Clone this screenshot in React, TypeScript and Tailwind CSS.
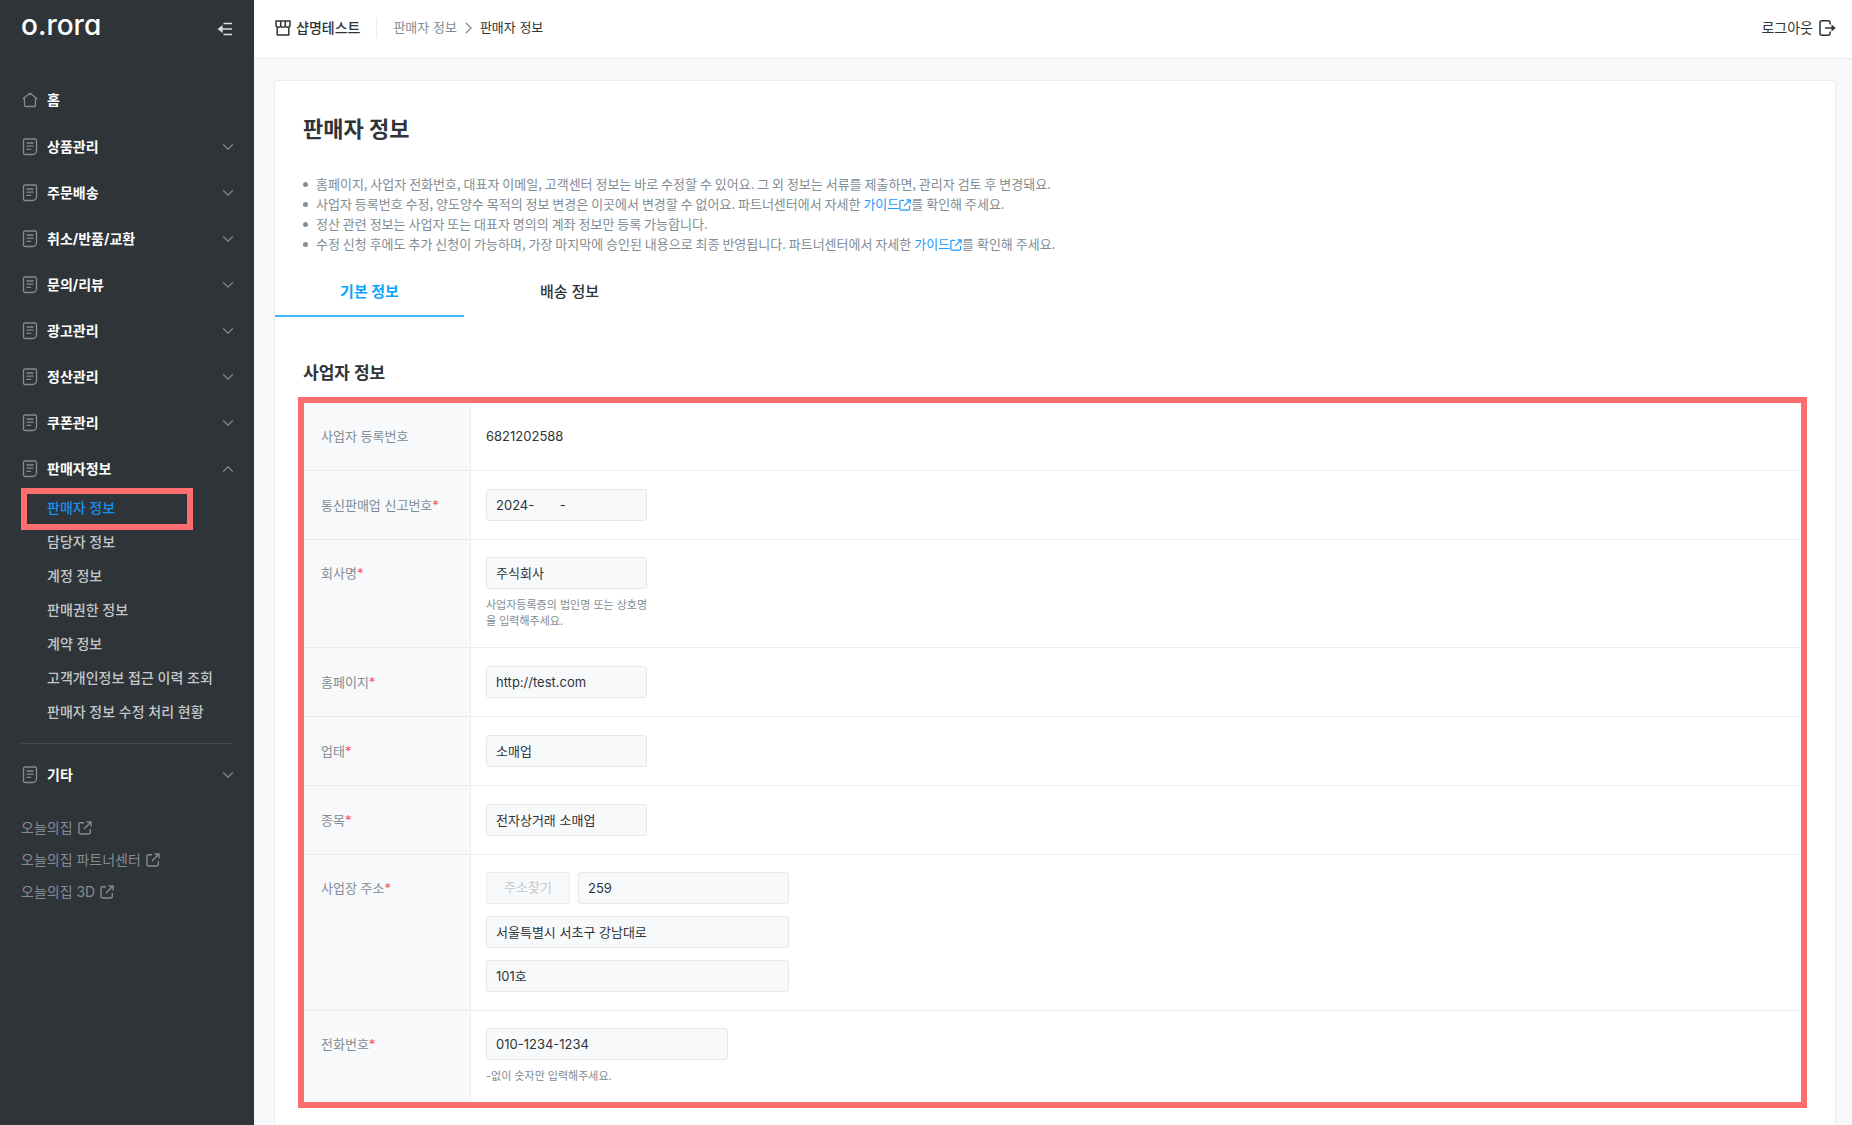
import { useState } from "react";
import type { ReactNode } from "react";

const menus = ["상품관리", "주문배송", "취소/반품/교환", "문의/리뷰", "광고관리", "정산관리", "쿠폰관리"];

const sellerMenus = [
    "판매자 정보",
    "담당자 정보",
    "계정 정보",
    "판매권한 정보",
    "계약 정보",
    "고객개인정보 접근 이력 조회",
    "판매자 정보 수정 처리 현황",
];

const outLinks = ["오늘의집", "오늘의집 파트너센터", "오늘의집 3D"];

function HomeIcon() {
    return (
        <svg width="16" height="16" viewBox="0 0 16 16" fill="none" stroke="currentColor" strokeWidth="1.3" strokeLinejoin="round">
            <path d="M8 1.2 1.2 6.6h1.3v6.6c0 .8.5 1.3 1.3 1.3h8.4c.8 0 1.3-.5 1.3-1.3V6.6h1.3z" />
        </svg>
    );
}

function DocIcon() {
    return (
        <svg width="16" height="18" viewBox="0 0 16 18" fill="none" stroke="currentColor" strokeWidth="1.3" strokeLinecap="round" strokeLinejoin="round">
            <path d="M2.9 1h10.200c.8 0 1.400.6 1.400 1.400v10.400c0 2-1.700 3.700-3.700 3.700H2.900c-.8 0-1.400-.6-1.400-1.400V2.400C1.500 1.600 2.100 1 2.900 1z" />
            <path d="M5 5h6M5 8.200h6M5 11.400h3.600" />
        </svg>
    );
}

function Chevron({ up }: { up?: boolean }) {
    return (
        <svg width="12" height="8" viewBox="0 0 12 8" fill="none" stroke="currentColor" strokeWidth="1.3">
            <path d={up ? "M1.2 6.6 6 1.8l4.8 4.8" : "M1.2 1.4 6 6.2l4.8-4.8"} />
        </svg>
    );
}

function OutIcon({ size }: { size: number }) {
    return (
        <svg className="inline-block shrink-0" width={size} height={size} viewBox="0 0 14 14" fill="none" stroke="currentColor" strokeWidth="1.4" strokeLinejoin="round">
            <path d="M6 1.7H2.4c-.8 0-1.4.6-1.4 1.4v8.5c0 .8.6 1.4 1.4 1.4h8.5c.8 0 1.4-.6 1.4-1.4V8" />
            <path d="M8.6 1h4.4v4.4M13 1 6 8" />
        </svg>
    );
}

function MenuItem({ label, open }: { label: string; open?: boolean }) {
    return (
        <button type="button" aria-expanded={!!open} className="flex h-[46px] w-full items-center pr-5 pl-[22px] text-left text-sm font-bold text-white">
            <span className="w-[25px] text-[#828c94]"><DocIcon /></span>
            <span className="flex-1">{label}</span>
            <span className="text-[#828c94]"><Chevron up={open} /></span>
        </button>
    );
}

function Sidebar() {
    return (
        <aside className="w-[254px] shrink-0 bg-[#2f3438]">
            <div className="flex h-[58px] items-center justify-between px-[21px]">
                <a href="#" className="pb-2 text-[28px] leading-9 font-medium text-white [font-feature-settings:'cv11']">o.rora</a>
                <button type="button" aria-label="메뉴 접기" className="text-[#dbdfe2]">
                    <svg width="16" height="14" viewBox="0 0 16 14" fill="none" stroke="currentColor" strokeWidth="1.6">
                        <path d="M6.5 1.5H15M2.5 7H15M6.5 12.5H15" />
                        <path d="M5.6 3 .6 7l5 4z" fill="currentColor" stroke="none" />
                    </svg>
                </button>
            </div>

            <nav className="pt-[18px]">
                <a href="#" className="flex h-12 items-center pl-[22px] text-sm font-bold text-white">
                    <span className="w-[25px] text-[#828c94]"><HomeIcon /></span>
                    홈
                </a>
                {menus.map((m) => (
                    <MenuItem key={m} label={m} />
                ))}
                <MenuItem label="판매자정보" open />
                <ul className="-mt-px">
                    {sellerMenus.map((m, i) => (
                        <li key={m} className="relative flex h-[34px] items-center pl-[47px] text-sm font-medium">
                            <a href="#" className={i === 0 ? "text-[#1590ef]" : "text-[#c2c8cc]"}>{m}</a>
                            {i === 0 && <span className="absolute -top-[3px] left-[21px] h-[42px] w-[172px] border-[6px] border-[#ff6e6e]" />}
                        </li>
                    ))}
                </ul>
                <hr className="mx-[21px] mt-[14px] mb-2 border-[#424a50]" />
                <MenuItem label="기타" />
            </nav>

            <ul className="mt-[14px] pl-[21px]">
                {outLinks.map((l) => (
                    <li key={l} className="flex h-8 items-center">
                        <a href="#" className="flex items-center gap-[5px] text-sm text-[#828c94]">
                            {l}
                            <OutIcon size={14} />
                        </a>
                    </li>
                ))}
            </ul>
        </aside>
    );
}

function Header() {
    return (
        <header className="flex h-[59px] items-center justify-between border-b border-[#eaedef] bg-white pr-4 pb-0.5 pl-[21px] text-[#2f3438]">
            <div className="flex items-center">
                <svg width="16" height="16" viewBox="0 0 16 16" fill="none" stroke="currentColor" strokeWidth="1.5" strokeLinejoin="round">
                    <path d="M1 1h14v4.6c0 1-.9 1.700-2.300 1.700S10.300 6.600 10.300 5.600c0 1-.9 1.700-2.300 1.700s-2.300-.7-2.300-1.700c0 1-.9 1.700-2.300 1.700S1 6.600 1 5.600zM5.700 1v4.600M10.300 1v4.600" />
                    <path d="M2.200 7.200V15h11.600V7.200" />
                </svg>
                <span className="ml-[5px] text-sm font-medium">샵명테스트</span>
                <span className="mx-4 h-5 w-px bg-[#eaedef]" />
                <nav className="flex items-center gap-2 text-[13px]">
                    <a href="#" className="text-[#828c94]">판매자 정보</a>
                    <svg width="7" height="12" viewBox="0 0 7 12" fill="none" stroke="#828c94" strokeWidth="1.3">
                        <path d="M1 1l5 5-5 5" />
                    </svg>
                    <span>판매자 정보</span>
                </nav>
            </div>
            <button type="button" className="flex items-center gap-1.5 text-sm">
                로그아웃
                <svg width="17" height="16" viewBox="0 0 17 16" fill="none" stroke="currentColor" strokeWidth="1.5">
                    <path d="M11 4.500V2.800c0-1.200-.8-2-2-2H3c-1.200 0-2 .8-2 2v10.400c0 1.200.8 2 2 2h6c1.200 0 2-.8 2-2v-1.700M6 8h7.500" />
                    <path d="M12.500 4.500 16.800 8l-4.300 3.500z" fill="currentColor" stroke="none" />
                </svg>
            </button>
        </header>
    );
}

function GuideLink() {
    return (
        <a href="#" className="text-[#1a9bff]">
            가이드<OutIcon size={12} />
        </a>
    );
}

function Row({ label, id, required, stacked, last, children }: { label: string; id?: string; required?: boolean; stacked?: boolean; last?: boolean; children: ReactNode }) {
    const pad = stacked ? "pt-[17px] pb-[18px]" : "py-[18px]";
    const line = last ? "" : "border-b";
    return (
        <tr className="align-top">
            <th scope="row" className={`${pad} ${line} border-r border-[#eaedef] bg-[#f8f9fb] pl-[17px] text-left font-normal leading-8 text-[#828c94]`}>
                <label htmlFor={id}>{label}</label>
                {required && <span className="text-[#ff5252]">*</span>}
            </th>
            <td className={`${pad} ${line} border-[#eaedef] pl-[15px] leading-8`}>{children}</td>
        </tr>
    );
}

function Field({ id, value, className, label }: { id: string; value: string; className: string; label?: string }) {
    return (
        <input
            id={id}
            type="text"
            readOnly
            aria-label={label}
            value={value}
            className={`${className} block h-8 rounded-[3px] border border-[#e6e8ea] bg-[#f8f9fb] px-[9px] text-[13px] text-[#2f3438] outline-none`}
        />
    );
}

function BusinessTable() {
    return (
        <div className="-ml-[5px] border-[6px] border-[#ff6e6e]">
            <table className="w-full table-fixed border-separate border-spacing-0 text-[13px] text-[#2f3438]">
                <colgroup>
                    <col className="w-[167px]" />
                    <col />
                </colgroup>
                <tbody>
                    <Row label="사업자 등록번호" stacked>6821202588</Row>
                    <Row label="통신판매업 신고번호" id="report" required>
                        <Field id="report" value={"2024-\u00a0\u00a0\u00a0\u00a0\u00a0\u00a0\u00a0-"} className="w-[161px]" />
                    </Row>
                    <Row label="회사명" id="company" required stacked>
                        <Field id="company" value="주식회사" className="w-[161px]" />
                        <p className="mt-2 w-[164px] text-[11px] leading-4 text-[#828c94]">사업자등록증의 법인명 또는 상호명을 입력해주세요.</p>
                    </Row>
                    <Row label="홈페이지" id="homepage" required>
                        <Field id="homepage" value="http://test.com" className="w-[161px]" />
                    </Row>
                    <Row label="업태" id="bizType" required>
                        <Field id="bizType" value="소매업" className="w-[161px]" />
                    </Row>
                    <Row label="종목" id="bizItem" required>
                        <Field id="bizItem" value="전자상거래 소매업" className="w-[161px]" />
                    </Row>
                    <Row label="사업장 주소" id="zip" required stacked>
                        <div className="flex w-[303px] flex-col gap-3">
                            <div className="flex gap-2">
                                <button type="button" disabled className="h-8 w-[84px] rounded-[3px] border border-[#eaedef] bg-[#f8f9fb] pb-0.5 text-[13px] leading-5 text-[#c2c8cc]">주소찾기</button>
                                <Field id="zip" value="259" className="min-w-0 flex-1" />
                            </div>
                            <Field id="address" label="주소" value="서울특별시 서초구 강남대로" className="w-full" />
                            <Field id="addressDetail" label="상세 주소" value="101호" className="w-full" />
                        </div>
                    </Row>
                    <Row label="전화번호" id="phone" required stacked last>
                        <Field id="phone" value="010-1234-1234" className="w-[242px]" />
                        <p className="mt-2 text-[11px] leading-4 text-[#828c94]">-없이 숫자만 입력해주세요.</p>
                    </Row>
                </tbody>
            </table>
        </div>
    );
}

export default function App() {
    const [tab, setTab] = useState("기본 정보");

    const notices = [
        <>홈페이지, 사업자 전화번호, 대표자 이메일, 고객센터 정보는 바로 수정할 수 있어요. 그 외 정보는 서류를 제출하면, 관리자 검토 후 변경돼요.</>,
        <>사업자 등록번호 수정, 양도양수 목적의 정보 변경은 이곳에서 변경할 수 없어요. 파트너센터에서 자세한 <GuideLink />를 확인해 주세요.</>,
        <>정산 관련 정보는 사업자 또는 대표자 명의의 계좌 정보만 등록 가능합니다.</>,
        <>수정 신청 후에도 추가 신청이 가능하며, 가장 마지막에 승인된 내용으로 최종 반영됩니다. 파트너센터에서 자세한 <GuideLink />를 확인해 주세요.</>,
    ];

    return (
        <div className="flex min-h-screen bg-[#f7f9fa] font-['Inter','Noto_Sans_CJK_KR',sans-serif]">
            <Sidebar />
            <div className="flex min-w-0 flex-1 flex-col">
                <Header />
                <main className="flex flex-1 flex-col pt-[21px] pr-4 pl-5">
                    <section className="flex-1 rounded-t border border-b-0 border-[#eaedef] bg-white pb-4">
                        <div className="px-7 pt-8">
                            <h1 className="text-[22px] leading-8 font-bold text-[#2f3438]">판매자 정보</h1>
                            <ul className="mt-[29px] font-['Noto_Sans_CJK_KR',sans-serif] text-[13px] leading-5 text-[#828c94]">
                                {notices.map((n, i) => (
                                    <li key={i} className="flex">
                                        <span className="mt-2 mr-2 h-[5px] w-[5px] shrink-0 rounded-full bg-[#828c94]" />
                                        <span>{n}</span>
                                    </li>
                                ))}
                            </ul>
                        </div>

                        {/* Tabs */}
                        <div className="mt-[14px] flex gap-[11px]">
                            {["기본 정보", "배송 정보"].map((t) => (
                                <button
                                    key={t}
                                    type="button"
                                    onClick={() => setTab(t)}
                                    className={`h-[49px] w-[189px] border-b-2 pt-0.5 text-[15px] ${tab === t ? "border-[#42b8ff] font-bold text-[#0aa5ff]" : "border-transparent font-medium text-[#2f3438]"}`}
                                >
                                    {t}
                                </button>
                            ))}
                        </div>

                        <div className="px-7 pt-[43px]">
                            <h2 className="mb-[11px] text-[17px] leading-[26px] font-bold text-[#2f3438]">사업자 정보</h2>
                            <BusinessTable />
                        </div>
                    </section>
                </main>
            </div>
        </div>
    );
}
